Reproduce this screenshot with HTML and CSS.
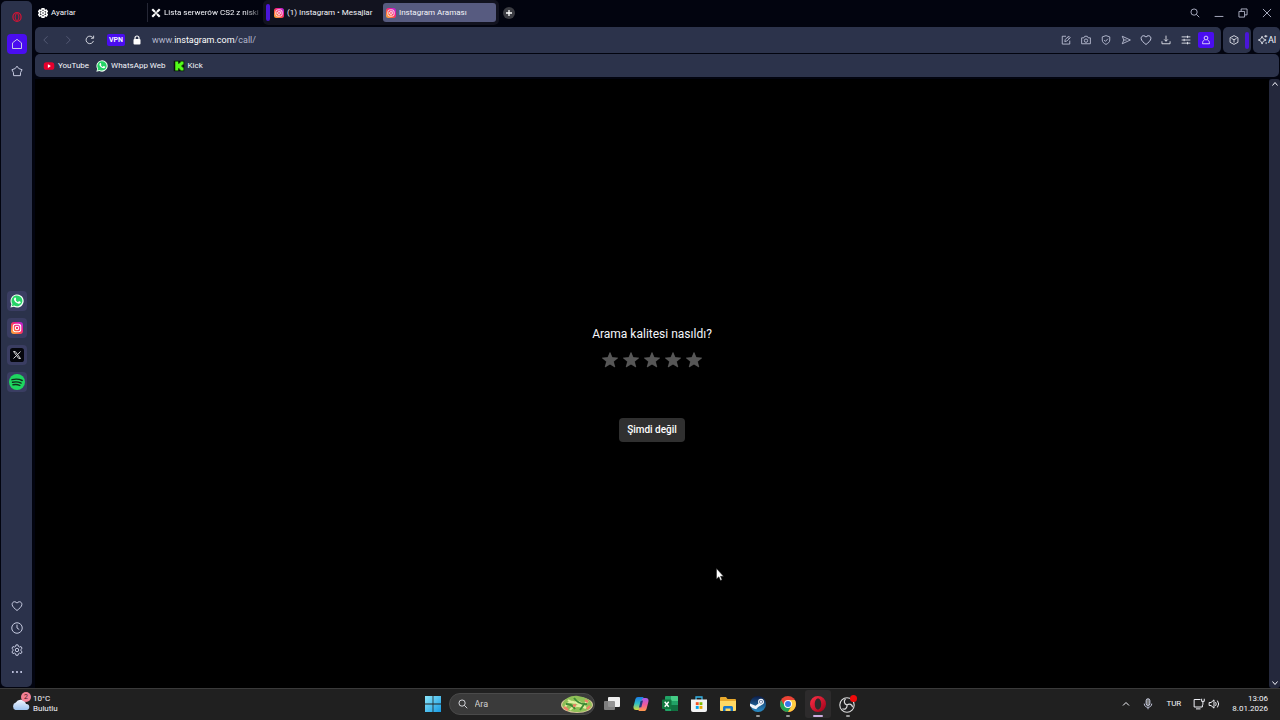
FILE: index.html
```html
<!DOCTYPE html>
<html lang="tr">
<head>
<meta charset="utf-8">
<title>Instagram Araması</title>
<link rel="stylesheet" href="styles.css">
</head>
<body>
<svg class="defs" aria-hidden="true">
  <defs>
    <linearGradient id="ig" x1="0" y1="1" x2="1" y2="0"><stop offset="0" stop-color="#ffc23d"/><stop offset=".35" stop-color="#ff5a3c"/><stop offset=".65" stop-color="#f0168f"/><stop offset="1" stop-color="#a52be8"/></linearGradient>
    <linearGradient id="win" x1="0" y1="0" x2="1" y2="1"><stop offset="0" stop-color="#8be6fa"/><stop offset="1" stop-color="#179be3"/></linearGradient>
    <linearGradient id="op" x1="0" y1="0" x2="1" y2="1"><stop offset="0" stop-color="#ff3047"/><stop offset="1" stop-color="#a00018"/></linearGradient>
    <linearGradient id="cpa" x1="0" y1="0" x2="0" y2="1"><stop offset="0" stop-color="#1b7be8"/><stop offset=".5" stop-color="#2fc0c4"/><stop offset="1" stop-color="#d9dc3a"/></linearGradient>
    <linearGradient id="cpb" x1="0" y1="0" x2="0" y2="1"><stop offset="0" stop-color="#a45cf0"/><stop offset=".5" stop-color="#ef5a9c"/><stop offset="1" stop-color="#ff9a4a"/></linearGradient>
    <linearGradient id="st" x1="0" y1="0" x2="0" y2="1"><stop offset="0" stop-color="#0c1c48"/><stop offset="1" stop-color="#2b8fc8"/></linearGradient>
    <linearGradient id="cl" x1="0" y1="0" x2="0" y2="1"><stop offset="0" stop-color="#f2f6ff"/><stop offset="1" stop-color="#9fc4f0"/></linearGradient>
    <symbol id="i-insta" viewBox="0 0 16 16"><rect width="16" height="16" rx="4" fill="url(#ig)"/><g fill="none" stroke="#fff" stroke-width="1.4"><rect x="3" y="3" width="10" height="10" rx="3"/><circle cx="8" cy="8" r="2.3"/></g><circle cx="11" cy="5" r=".8" fill="#fff"/></symbol>
    <symbol id="i-wa" viewBox="0 0 16 16"><path d="M.5 15.5 1.6 11.7A7.5 7.5 0 1 1 4.400 14.500Z" fill="#f2fff5"/><path d="M2 14 2.800 11.300A6.200 6.200 0 1 1 4.800 13.200Z" fill="#25d366"/><path d="M5.300 4.300c.5-.5 1-.4 1.200.1l.5 1.200c.2.400-.4.900-.6 1.200.6 1.200 1.500 2 2.700 2.500l.9-1c.3-.3.5-.2.8-.1l1.200.6c.4.200.4.500.2 1-.4.900-1.400 1.400-2.300 1.200C7 10.400 5.200 8.500 4.600 6.500c-.2-.8.1-1.600.7-2.200Z" fill="#fff"/></symbol>
    <symbol id="i-heart" viewBox="0 0 16 16"><path d="M8 14C5 11.500 1.500 9 1.500 5.800 1.500 3.700 3 2.300 4.800 2.300c1.400 0 2.500.7 3.200 1.900.7-1.200 1.800-1.900 3.200-1.900 1.800 0 3.300 1.400 3.300 3.500C14.500 9 11 11.500 8 14Z"/></symbol>
    <symbol id="i-search" viewBox="0 0 16 16"><circle cx="6.500" cy="6.500" r="5"/><path d="m10.300 10.300 4.500 4.500"/></symbol>
    <symbol id="i-gear" viewBox="0 0 16 16"><path d="M6.600 1.200h2.800l.4 2 1.600.9 2-.7 1.400 2.400-1.600 1.400v1.800l1.600 1.400-1.400 2.400-2-.7-1.600.9-.4 2H6.600l-.4-2-1.600-.9-2 .7-1.400-2.400L2.800 9V7.200L1.200 5.800l1.400-2.400 2 .7 1.600-.9Z"/><circle cx="8" cy="8" r="2.300"/></symbol>
    <symbol id="i-star" viewBox="0 0 16 16"><path d="M8 .5 10.100 5.600 15.700 6 11.400 9.600 12.800 15 8 12.100 3.200 15 4.600 9.600.3 6 5.900 5.600Z" fill="#565656" stroke="#6a6a6a" stroke-width=".6"/></symbol>
    <symbol id="i-opera" viewBox="0 0 16 16"><path d="M8 0a8 8 0 1 0 0 16A8 8 0 1 0 8 0Zm0 2.500c2 0 3.200 2.500 3.200 5.500S10 13.500 8 13.500 4.800 11 4.800 8 6 2.500 8 2.500Z" fill="url(#op)" fill-rule="evenodd"/></symbol>
  </defs>
</svg>

<div class="browser">
  <nav class="sidebar" aria-label="Kenar çubuğu">
    <div class="side-group">
      <button class="side-btn" aria-label="Opera"><svg class="ico10" viewBox="0 0 16 16"><ellipse cx="8" cy="8" rx="6.500" ry="7" fill="none" stroke="#d01436" stroke-width="2"/><ellipse cx="8" cy="8" rx="3" ry="5.500" fill="none" stroke="#d01436" stroke-width="1.500"/></svg></button>
      <button class="side-btn home" aria-label="Ana sayfa"><svg class="ico12 line" viewBox="0 0 16 16"><path d="M2 6.500 8 1.800l6 4.700V14H2Z"/></svg></button>
      <button class="side-btn" aria-label="Yer imleri"><svg class="ico12 line" viewBox="0 0 16 16"><path d="m8 1.500 2.300 3.200 4.500 1.600L12.800 10l-.3 4.200H3.500L3.200 10l-2-3.700 4.500-1.600Z"/></svg></button>
    </div>
    <div class="side-group apps">
      <button class="side-btn app" aria-label="WhatsApp"><svg class="ico14"><use href="#i-wa"/></svg></button>
      <button class="side-btn app" aria-label="Instagram"><svg class="ico12"><use href="#i-insta"/></svg></button>
      <button class="side-btn app" aria-label="X"><svg class="ico14" viewBox="0 0 16 16"><rect width="16" height="16" rx="3" fill="#05060c"/><path d="M4 4h2l6 8h-2ZM12 4 8.700 7.500M7.200 8.900 4 12" fill="none" stroke="#ddd" stroke-width="1.100"/></svg></button>
      <button class="side-btn app" aria-label="Spotify"><svg class="ico16" viewBox="0 0 16 16"><circle cx="8" cy="8" r="8" fill="#1ed760"/><path d="M3 5.700c3.500-1 7.200-.7 10.200.8M3.500 8.300c3-.8 6-.5 8.600.8M4 10.800c2.500-.6 4.800-.4 6.900.7" fill="none" stroke="#10301c" stroke-width="1.400" stroke-linecap="round"/></svg></button>
    </div>
    <div class="side-group tools">
      <button class="side-btn" aria-label="Favoriler"><svg class="ico12 line"><use href="#i-heart"/></svg></button>
      <button class="side-btn" aria-label="Geçmiş"><svg class="ico12 line" viewBox="0 0 16 16"><circle cx="8" cy="8" r="7"/><path d="M8 3.500V8l3 2"/></svg></button>
      <button class="side-btn" aria-label="Ayarlar"><svg class="ico12 line"><use href="#i-gear"/></svg></button>
      <button class="side-btn" aria-label="Diğer"><svg class="ico12" viewBox="0 0 16 16"><g fill="#dfe2ff"><circle cx="2.500" cy="8" r="1.200"/><circle cx="8" cy="8" r="1.200"/><circle cx="13.500" cy="8" r="1.200"/></g></svg></button>
    </div>
  </nav>

  <div class="window">
    <header class="tabbar">
      <button class="tab"><svg class="ico10 gear"><use href="#i-gear"/></svg><span>Ayarlar</span></button>
      <button class="tab divided"><svg class="ico10" viewBox="0 0 16 16"><path d="m2 2 4.500 4.500M14 2 9.500 6.500M2 14l4.500-4.500M14 14 9.500 9.500" stroke="#fff" stroke-width="3.400"/><path d="M8 5.500 10.500 8 8 10.500 5.500 8Z" fill="#fff"/></svg><span class="fade">Lista serwerów CS2 z niski</span></button>
      <div class="tab-group">
        <span class="group-mark"></span>
        <button class="tab grouped"><svg class="ico10"><use href="#i-insta"/></svg><span>(1) Instagram • Mesajlar</span></button>
        <button class="tab grouped active"><svg class="ico10"><use href="#i-insta"/></svg><span>Instagram Araması</span></button>
      </div>
      <button class="new-tab" aria-label="Yeni sekme"><svg class="ico6" viewBox="0 0 6 6"><path d="M3 0v6M0 3h6" stroke="#fff" stroke-width="1.300"/></svg></button>
      <div class="window-controls">
        <button aria-label="Ara"><svg class="ico10 line"><use href="#i-search"/></svg></button>
        <button aria-label="Küçült"><svg class="ico10 line" viewBox="0 0 16 16"><path d="M1 13.500h14"/></svg></button>
        <button aria-label="Geri yükle"><svg class="ico10 line" viewBox="0 0 16 16"><path d="M1.500 5.500h9v9h-9ZM5 5V1.500h9.500V11H11"/></svg></button>
        <button aria-label="Kapat"><svg class="ico10 line" viewBox="0 0 16 16"><path d="m1.500 1.500 13 13M14.500 1.500l-13 13"/></svg></button>
      </div>
    </header>

    <div class="toolbar">
      <div class="address-panel">
        <div class="nav-buttons">
          <button aria-label="Geri"><svg class="ico10 line dim" viewBox="0 0 16 16"><path d="M10.500 2 4.500 8l6 6"/></svg></button>
          <button aria-label="İleri"><svg class="ico10 line dim" viewBox="0 0 16 16"><path d="m5.500 2 6 6-6 6"/></svg></button>
          <button aria-label="Yenile"><svg class="ico10 line bright" viewBox="0 0 16 16"><path d="M13.500 9.500A6 6 0 1 1 12.500 4.200M13.800 1v4.200H9.600"/></svg></button>
        </div>
        <button class="vpn">VPN</button>
        <svg class="lock" viewBox="0 0 8 10"><path d="M2 4.500V3a2 2 0 0 1 4 0v1.500" fill="none" stroke="#fff" stroke-width="1.200"/><rect x=".5" y="4" width="7" height="5.500" rx="1" fill="#fff"/></svg>
        <a class="url" href="#">www.<strong>instagram.com</strong>/call/</a>
        <div class="actions">
          <button aria-label="Düzenle"><svg class="ico10 line" viewBox="0 0 16 16"><path d="M8 2H2v12.500h12V9M6 10.500l.8-3.300 5.400-5.400 2.500 2.500-5.400 5.400ZM10.500 3.500l2.500 2.500"/></svg></button>
          <button aria-label="Anlık görüntü"><svg class="ico10 line" viewBox="0 0 16 16"><path d="M1 4.500h3.500L6 2h4l1.500 2.500H15V14H1Z"/><circle cx="8" cy="9" r="2.700"/></svg></button>
          <button aria-label="Koruma"><svg class="ico10 line" viewBox="0 0 16 16"><path d="M8 1 14 3v5c0 3.500-3 5.800-6 7-3-1.200-6-3.500-6-7V3Z"/><path d="m5 8 2.200 2.200L11 6"/></svg></button>
          <button aria-label="Gönder"><svg class="ico10 line" viewBox="0 0 16 16"><path d="M2 2 15 8 2 14 4.500 8ZM4.500 8H9"/></svg></button>
          <button aria-label="Favori"><svg class="ico12 line"><use href="#i-heart"/></svg></button>
          <button aria-label="İndirilenler"><svg class="ico10 line bright" viewBox="0 0 16 16"><path d="M8 1v9M5 7l3 3 3-3M1.500 10v4h13v-4"/></svg></button>
          <button aria-label="Kolay kurulum"><svg class="ico10 line bright" viewBox="0 0 16 16"><path d="M1 3h14M1 8h14M1 13h14M10.500 1v4M5 6v4M10.500 11v4"/></svg></button>
          <button class="profile" aria-label="Profil"><svg class="ico10 line bright" viewBox="0 0 16 16"><circle cx="8" cy="4.800" r="3"/><path d="M5.500 8C3 9 2.500 11 2.500 14h11c0-3-.5-5-3-6"/></svg></button>
        </div>
      </div>
      <div class="mini-panel">
        <button aria-label="Uzantılar"><svg class="ico10 line bright" viewBox="0 0 16 16"><path d="m8 1 6.300 3.300v7.400L8 15l-6.300-3.300V4.300ZM4 5.500l4 2 4-2M8 7.500V12"/></svg></button>
        <span class="group-mark"></span>
      </div>
      <button class="mini-panel ai"><svg class="ico10 line bright" viewBox="0 0 16 16"><path d="M6.500 2 8.300 6 13 8l-4.700 2-1.800 4.500L4.700 10 .5 8l4.200-2ZM12.500 0v4M15 2h-5M13 11.500v3"/></svg><span>AI</span></button>
    </div>

    <nav class="bookmarks" aria-label="Yer imleri çubuğu">
      <a href="#"><svg class="ico12" viewBox="0 0 16 16"><rect x="1" y="3" width="14" height="10" rx="3.500" fill="#e6002d"/><path d="m6.500 5.500 4 2.500-4 2.500Z" fill="#fff"/></svg>YouTube</a>
      <a href="#"><svg class="ico12"><use href="#i-wa"/></svg>WhatsApp Web</a>
      <a href="#"><svg class="ico12" viewBox="0 0 16 16"><rect x="1" y="1" width="14" height="14" fill="#071407"/><path d="M3 2h4v3h1.500V3.500H10V2h4v4h-1.500v1.300H11v1.400h1.500V10H14v4h-4v-1.500H8.500V11H7v3H3Z" fill="#53fc18"/></svg>Kick</a>
    </nav>

    <div class="viewport">
      <main class="page">
        <h1 class="question">Arama kalitesi nasıldı?</h1>
        <div class="stars">
          <button aria-label="1 yıldız"><svg class="ico16"><use href="#i-star"/></svg></button>
          <button aria-label="2 yıldız"><svg class="ico16"><use href="#i-star"/></svg></button>
          <button aria-label="3 yıldız"><svg class="ico16"><use href="#i-star"/></svg></button>
          <button aria-label="4 yıldız"><svg class="ico16"><use href="#i-star"/></svg></button>
          <button aria-label="5 yıldız"><svg class="ico16"><use href="#i-star"/></svg></button>
        </div>
        <button class="later">Şimdi değil</button>
      </main>
      <div class="scrollbar">
        <svg class="ico6 line bright" viewBox="0 0 6 6"><path d="M.5 4.500 3 1.500l2.500 3"/></svg>
        <svg class="ico6 line bright" viewBox="0 0 6 6"><path d="M.5 1.500 3 4.500l2.500-3"/></svg>
      </div>
    </div>
  </div>
</div>

<footer class="taskbar">
  <button class="weather">
    <span class="weather-icon"><svg class="cloud" viewBox="0 0 18 12"><path d="M4 12a4 4 0 0 1 .3-7.500A5.500 5.500 0 0 1 14.500 6 3 3 0 0 1 15 12Z" fill="url(#cl)"/></svg><span class="badge">2</span></span>
    <span class="two-lines">10°C<br>Bulutlu</span>
  </button>
  <div class="dock">
    <button class="task" aria-label="Başlat"><svg class="ico16" viewBox="0 0 16 16"><path d="M0 0h7.600v7.600H0ZM8.400 0H16v7.600H8.400ZM0 8.400h7.600V16H0ZM8.400 8.400H16V16H8.400Z" fill="url(#win)"/></svg></button>
    <label class="search"><svg class="ico10 line bright"><use href="#i-search"/></svg><input type="text" placeholder="Ara" aria-label="Ara">
      <svg class="salad" viewBox="0 0 34 18"><ellipse cx="17" cy="10" rx="16" ry="8" fill="#d9c89a"/><path d="M2 10C4 3 12 0 18 1s14 3 14 10c-3 5-9 6-15 6S4 15 2 10Z" fill="#8fbf58"/><path d="M5 12q5-8 11-4t12-2M8 5q5 4 8 2t10 6M10 15q5-7 16-2" fill="none" stroke="#dff0a0" stroke-width="2"/><path d="M6 9q6 0 9 5M14 3q5 7 13 6M20 15l5-7" fill="none" stroke="#3d8b35" stroke-width="1.800"/><path d="m4 12 4 3M25 5l3 2M13 11l3-1M27 14l3-3" stroke="#ef8066" stroke-width="2.400"/></svg></label>
    <button class="task" aria-label="Görev görünümü"><svg class="ico16" viewBox="0 0 16 16"><rect x="4" y="1" width="12" height="10" rx="1" fill="#eee"/><rect x="0" y="5" width="11" height="9" rx="1" fill="#888" opacity=".9"/></svg></button>
    <button class="task" aria-label="Copilot"><svg class="ico16" viewBox="0 0 16 16"><path d="M5 1h5.500L7.200 12c-.5 1.500-1.200 2-2.500 2H3.200C1 14 0 12.500.6 10.200L2.400 3.300C2.900 1.700 3.600 1 5 1Z" fill="url(#cpa)"/><path d="M11 15H5.500L8.800 4c.5-1.500 1.200-2 2.500-2h1.500C15 2 16 3.500 15.400 5.800l-1.800 6.900c-.5 1.600-1.200 2.300-2.600 2.300Z" fill="url(#cpb)"/><path d="m7.600 5 2.400-.5-1.700 6.700-2.400.3Z" fill="#243a83"/></svg></button>
    <button class="task" aria-label="Excel"><svg class="ico16" viewBox="0 0 16 16"><rect x="3" width="13" height="15" rx="1" fill="#21a366"/><path d="M9 0h6a1 1 0 0 1 1 1v4H9Z" fill="#45cc86"/><path d="M9 9h7v5a1 1 0 0 1-1 1H9Z" fill="#107040"/><rect y="3.500" width="9.500" height="9.500" rx="1" fill="#10773e"/><path d="m2.700 5.700 4 5M6.700 5.700l-4 5" stroke="#fff" stroke-width="1.400"/></svg></button>
    <button class="task" aria-label="Microsoft Store"><svg class="ico16" viewBox="0 0 16 16"><path d="M5 4V1h6v3" fill="none" stroke="#36b5e8" stroke-width="1.300"/><path d="M0 3.500h16V14a2 2 0 0 1-2 2H2a2 2 0 0 1-2-2Z" fill="#f2f2f2"/><path d="M4.800 6.200h2.900v2.900H4.800Z" fill="#f25022"/><path d="M8.500 6.200h2.900v2.900H8.500Z" fill="#7fba00"/><path d="M4.800 10h2.900v2.900H4.800Z" fill="#00a4ef"/><path d="M8.500 10h2.900v2.900H8.500Z" fill="#e8a600"/></svg></button>
    <button class="task" aria-label="Dosya Gezgini"><svg class="ico16" viewBox="0 0 16 16"><path d="M0 2a1 1 0 0 1 1-1h5l1.500 2H15a1 1 0 0 1 1 1v10H0Z" fill="#e9a92c"/><path d="M0 5h16v9a1 1 0 0 1-1 1H1a1 1 0 0 1-1-1Z" fill="#ffd964"/><path d="M3 15v-3.500A1.500 1.500 0 0 1 4.500 10h7a1.500 1.500 0 0 1 1.500 1.500V15h-2.500v-2.500h-5V15Z" fill="#1878c9"/></svg></button>
    <button class="task open" aria-label="Steam"><svg class="ico16" viewBox="0 0 16 16"><circle cx="8" cy="8" r="8" fill="url(#st)"/><path d="m0 7.500 5.500 2.300 3.300-2.600L11 3.800l3 2.500-2.800 2.900-3 1.900-2 2.200-3.500-1L0 10Z" fill="#f2f6fa"/><circle cx="11" cy="5.800" r="3" fill="#f2f6fa"/><circle cx="11" cy="5.800" r="1.800" fill="#22466f"/><circle cx="11" cy="5.800" r="1.200" fill="#eef"/></svg></button>
    <button class="task open" aria-label="Chrome"><svg class="ico16" viewBox="0 0 16 16"><circle cx="8" cy="8" r="8" fill="#ea4335"/><path d="M1.100 4A8 8 0 0 0 8 16l3.500-6L8 8H3.400Z" fill="#23a455"/><path d="M14.900 4A8 8 0 0 1 8 16l3.500-6L8 4Z" fill="#ffcd40"/><circle cx="8" cy="8" r="4" fill="#fff"/><circle cx="8" cy="8" r="3" fill="#3b78e8"/></svg></button>
    <button class="task open current" aria-label="Opera"><svg class="ico16"><use href="#i-opera"/></svg></button>
    <button class="task open" aria-label="OBS"><svg class="ico18" viewBox="0 0 18 18"><circle cx="8" cy="10" r="7.200" fill="#202022" stroke="#ddd" stroke-width="1.100"/><g fill="none" stroke="#ddd" stroke-width="1.200"><path d="M8 10C5 9 4.500 6 6.500 4M8 10c2.500-2 5.500-.5 5.500 2.200M8 10c.5 3-2 5-4.600 3.800"/></g><circle cx="14.500" cy="3.500" r="3.500" fill="#f00a0a"/></svg></button>
  </div>
  <div class="tray">
    <button aria-label="Gizli simgeler"><svg class="ico8 line bright" viewBox="0 0 8 8"><path d="m1 5.500 3-3 3 3"/></svg></button>
    <button aria-label="Mikrofon"><svg class="ico12 line" viewBox="0 0 16 16"><rect x="5.500" y="1" width="5" height="9" rx="2.500" fill="#777"/><path d="M3 7.500c0 6.500 10 6.500 10 0M8 12.500V15"/></svg></button>
    <button class="lang">TUR</button>
    <button class="status" aria-label="Ağ ve ses"><svg class="ico12 line bright" viewBox="0 0 16 16"><path d="M10 2H1.500v10h11V9M4 14.500h6M11.500 1v3.500h3.500V1M13.200 4.500V9"/></svg><svg class="ico12 line bright" viewBox="0 0 16 16"><path d="M1.500 6v4H4l4 3.500v-11L4 6ZM10 5.500q2 2.500 0 5M12.500 3.500q3.500 4.500 0 9"/></svg></button>
    <time class="two-lines" datetime="2026-01-08T13:06">13:06<br>8.01.2026</time>
  </div>
</footer>

<svg class="cursor" viewBox="0 0 8 13" aria-hidden="true"><path d="M.5.500v10.500l2.400-2.200L4.500 12.500 6 11.800 4.500 8.300h3Z" fill="#fff" stroke="#222" stroke-width=".5"/></svg>
</body>
</html>
```

FILE: styles.css
```css
* {
  box-sizing: border-box;
}

body {
  margin: 0;
  min-height: 100vh;
  display: grid;
  grid-template-rows: 1fr 32px;
  background: #02040f;
  color: #f4f5fa;
  font: 8px/12px Roboto, "Noto Sans", sans-serif;
}

button {
  display: flex;
  align-items: center;
  justify-content: center;
  margin: 0;
  padding: 0;
  border: 0;
  background: none;
  color: inherit;
  font: inherit;
}

a {
  color: inherit;
  text-decoration: none;
}

svg {
  display: block;
  flex: none;
}

.defs {
  position: absolute;
  width: 0;
  height: 0;
}

.ico6 { width: 6px; height: 6px; }
.ico8 { width: 8px; height: 8px; }
.ico10 { width: 10px; height: 10px; }
.ico12 { width: 12px; height: 12px; }
.ico14 { width: 14px; height: 14px; }
.ico16 { width: 16px; height: 16px; }
.ico18 { width: 18px; height: 18px; }

.line {
  fill: none;
  stroke: #c9cde2;
  stroke-width: 1.3;
}

.line.bright { stroke: #f4f5fb; }
.line.dim { stroke: #5b607c; }

.ico6.line,
.ico8.line { stroke-width: 1; }

.browser {
  display: grid;
  grid-template-columns: 32px 1fr;
  gap: 3px;
}

.sidebar {
  display: flex;
  flex-direction: column;
  justify-content: space-between;
  margin: 1px 0 1px 1px;
  padding: 2px 0 4px;
  border-radius: 5px;
  background: #2b324b;
}

.side-group {
  display: grid;
  grid-auto-rows: 27px;
  justify-items: center;
  align-items: center;
}

.side-group.apps { padding-top: 4px; }
.side-group.tools { grid-auto-rows: 22px; }

.side-btn {
  width: 20px;
  height: 20px;
  border-radius: 4px;
}

.side-btn.home { background: #4a0df0; }
.side-btn.app { background: #3a3d62; }

.window {
  display: grid;
  grid-template-rows: 26px 26px 23px 1fr;
  row-gap: 1px;
  min-width: 0;
}

.tabbar {
  display: flex;
  align-items: flex-start;
}

.tab {
  justify-content: flex-start;
  gap: 3px;
  width: 112px;
  height: 19px;
  margin-top: 3px;
  padding-left: 3px;
  white-space: nowrap;
}

.gear { fill: none; stroke: #fff; stroke-width: 2.5; }

.tab.divided {
  border-left: 1px solid #252735;
}

.fade {
  mask-image: linear-gradient(to right, #000 85%, #0004);
}

.tab-group {
  display: flex;
  margin-left: 4px;
  padding: 0 3px;
  height: 25px;
  border-radius: 5px;
  background: #12131f;
}

.group-mark {
  width: 4px;
  height: 17px;
  border-radius: 2px;
  background: #4a16d8;
}

.tab-group .group-mark {
  margin: 4px 4px 0 0;
}

.tab.grouped { padding-left: 0; width: 109px; }

.tab.grouped.active {
  width: 113px;
  padding-left: 3px;
  border-radius: 3px;
  background: #575b80;
}

.new-tab {
  width: 12px;
  height: 12px;
  margin: 7px 0 0 4px;
  border-radius: 50%;
  background: #3b3c42;
}

.window-controls {
  display: flex;
  margin: 3px 1px 0 auto;
}

.window-controls button {
  width: 24px;
  height: 20px;
}

.toolbar {
  display: flex;
  gap: 2px;
}

.address-panel,
.mini-panel,
.bookmarks {
  display: flex;
  align-items: center;
  background: #2c334b;
  border-radius: 5px;
}

.address-panel { flex: 1; }

.nav-buttons {
  display: flex;
}

.nav-buttons button {
  width: 22px;
  height: 22px;
}

.vpn {
  width: 18px;
  height: 12px;
  margin-left: 6px;
  border-radius: 2px;
  background: #4a0df0;
  font-size: 7px;
  font-weight: 700;
}

.lock {
  width: 8px;
  height: 10px;
  margin: 0 11px 0 8px;
}

.url {
  color: #b3b7cb;
  font-size: 9px;
}

.url strong {
  color: #fff;
  font-weight: 400;
}

.actions {
  display: flex;
  margin: 0 5px 0 auto;
}

.actions button {
  width: 20px;
  height: 16px;
}

.actions .profile {
  width: 16px;
  margin: 0 2px;
  border-radius: 2px;
  background: #4a0df0;
}

.mini-panel {
  justify-content: space-between;
  width: 28px;
  padding: 0 2px 0 6px;
}

.mini-panel.ai {
  justify-content: flex-start;
  width: 27px;
  padding: 0 0 0 5px;
  font-size: 9px;
}

.bookmarks {
  gap: 7px;
  margin-right: 1px;
  padding-left: 8px;
}

.bookmarks a {
  display: flex;
  align-items: center;
  gap: 3px;
}

.viewport {
  display: grid;
  grid-template-columns: 1fr 11px;
  padding-top: 1px;
}

.page {
  display: flex;
  flex-direction: column;
  align-items: center;
  justify-content: center;
  background: #000;
}

.question {
  margin: 0;
  font-size: 12px;
  font-weight: 400;
  line-height: 16px;
}

.stars {
  display: flex;
  gap: 5px;
  margin: 10px 0 50px;
}

.later {
  height: 24px;
  padding: 0 8px;
  border-radius: 4px;
  background: #303030;
  color: #fff;
  font-size: 10px;
  font-weight: 500;
}

.scrollbar {
  display: flex;
  flex-direction: column;
  justify-content: space-between;
  align-items: center;
  padding: 2px 0;
  border-radius: 3px;
  background: #24283c;
}

.taskbar {
  display: grid;
  grid-template-columns: 1fr auto 1fr;
  padding-bottom: 1px;
  border-top: 1px solid #3a3a3a;
  background: #202020;
}

.weather {
  justify-self: start;
  gap: 3px;
  padding-left: 11px;
  text-align: left;
}

.two-lines {
  line-height: 10px;
}

.weather-icon {
  position: relative;
}

.cloud { width: 19px; height: 12px; }

.badge {
  position: absolute;
  top: -6px;
  right: -1px;
  width: 10px;
  height: 10px;
  border-radius: 50%;
  background: #f27f94;
  color: #4a1020;
  font-size: 7px;
  line-height: 10px;
  text-align: center;
}

.dock {
  display: flex;
  align-items: center;
  gap: 3px;
}

.task {
  position: relative;
  width: 26px;
  height: 28px;
  border-radius: 3px;
}

.task.open { margin-left: 1px; }
.task.current { background: #2d2b2c; }

.task.open::after {
  content: "";
  position: absolute;
  bottom: 1px;
  left: 11px;
  width: 4px;
  height: 2px;
  border-radius: 1px;
  background: #9a9a9a;
}

.task.current::after {
  left: 8px;
  width: 10px;
  background: #cbaee0;
}

.search {
  display: flex;
  align-items: center;
  gap: 7px;
  width: 146px;
  height: 22px;
  margin-right: 1px;
  padding: 0 0 0 8px;
  border: 1px solid #4a4a4a;
  border-radius: 11px;
  background: #3a3a3a;
}

.search input {
  flex: 1;
  min-width: 0;
  padding: 0;
  border: 0;
  background: none;
  color: #ddd;
  font: inherit;
  font-size: 9px;
}

.search input::placeholder { color: #d0d0d0; }

.salad { width: 34px; height: 18px; }

.tray {
  display: flex;
  align-items: center;
  justify-self: end;
  gap: 12px;
  padding-right: 12px;
}

.tray time {
  text-align: right;
}

.status { gap: 3px; }

.cursor {
  position: absolute;
  left: 716px;
  top: 568px;
  width: 8px;
  height: 13px;
}
```
